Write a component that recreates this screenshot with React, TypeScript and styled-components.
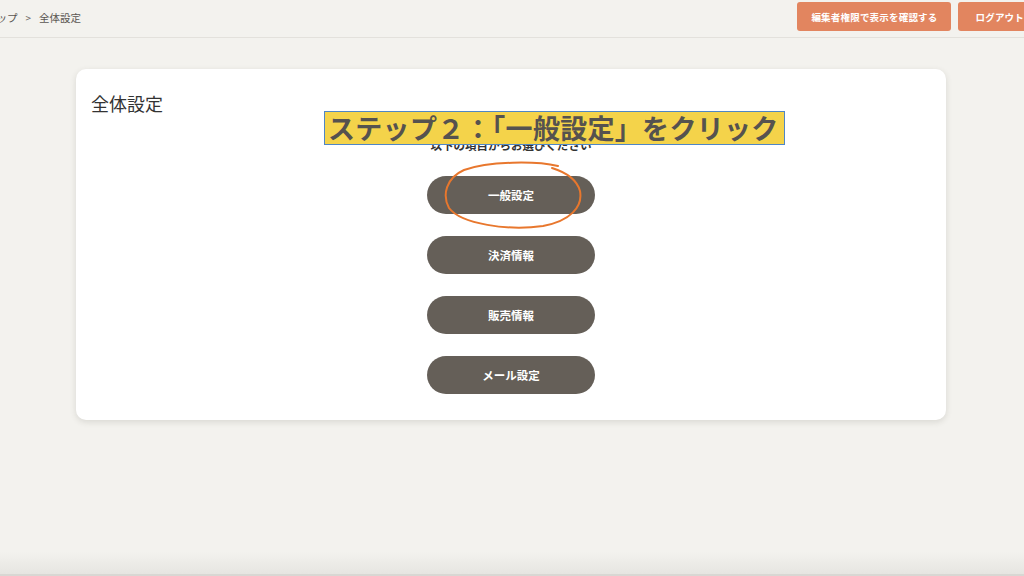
import React from "react";
import styled, { createGlobalStyle } from "styled-components";

const GlobalStyle = createGlobalStyle`
  html, body { margin: 0; padding: 0; }
  body {
    background: #f3f2ee;
    font-family: "Noto Sans CJK JP", "Noto Sans", sans-serif;
    overflow: hidden;
  }
`;

const Page = styled.div`
  position: relative;
  width: 1024px;
  height: 576px;
  display: flex;
  flex-direction: column;
  overflow: hidden;
  background: #f3f2ee;
`;

const Header = styled.header`
  height: 37px;
  border-bottom: 1px solid #e3e1dc;
  display: flex;
  align-items: center;
  justify-content: space-between;
`;

const Breadcrumb = styled.nav`
  display: flex;
  align-items: center;
  gap: 8px;
  margin-left: -14px;
  margin-top: -2px;
  font-size: 10.5px;
  color: #5a5652;
`;

const Sep = styled.span`
  color: #6a6661;
  font-size: 10px;
`;

const Actions = styled.div`
  display: flex;
  gap: 7px;
  margin-right: -17px;
  margin-top: -4px;
`;

const HeadButton = styled.button<{ $pad: number }>`
  height: 29px;
  padding: 0 ${(p) => p.$pad}px;
  border: none;
  border-radius: 3px;
  background: #e2855f;
  color: #fff;
  font-family: inherit;
  font-size: 9.5px;
  font-weight: 700;
  letter-spacing: 0.2px;
`;

const Main = styled.main`
  flex: 1;
  padding-top: 31px;
`;

const Card = styled.section`
  width: 870px;
  margin-left: 76px;
  background: #fff;
  border-radius: 10px;
  box-shadow: 0 2px 6px rgba(60, 55, 45, 0.14);
  padding: 22px 15px 26px;
  box-sizing: border-box;
  display: flex;
  flex-direction: column;
`;

const Title = styled.h2`
  margin: 0;
  font-size: 18px;
  line-height: 24px;
  font-weight: 400;
  color: #333;
`;

const Lead = styled.p`
  margin: 22px 0 0;
  text-align: center;
  font-size: 11.5px;
  line-height: 16px;
  font-weight: 700;
  color: #333;
`;

const Menu = styled.div`
  margin-top: 23px;
  display: flex;
  flex-direction: column;
  align-items: center;
  gap: 22px;
`;

const MenuButton = styled.button`
  width: 168px;
  height: 38px;
  border: none;
  border-radius: 19px;
  background: #655f58;
  color: #fff;
  font-family: inherit;
  font-size: 11.5px;
  font-weight: 700;
`;

const FooterShade = styled.div`
  height: 22px;
  background: linear-gradient(#f3f2ee, #e6e5e1);
  border-bottom: 2px solid #d8d7d3;
`;

const Banner = styled.div`
  position: absolute;
  left: 324px;
  top: 111px;
  width: 461px;
  height: 34px;
  box-sizing: border-box;
  border: 1.5px solid #4f86c6;
  background: #f4d34a;
  color: #55524f;
  font-size: 27px;
  font-weight: 700;
  line-height: 31px;
  white-space: nowrap;
  padding-left: 3px;
  letter-spacing: 0.3px;
`;

const Circle = styled.svg`
  position: absolute;
  left: 440px;
  top: 158px;
  pointer-events: none;
`;

const menu = ["一般設定", "決済情報", "販売情報", "メール設定"];

export default function App() {
  return (
    <Page>
      <GlobalStyle />
      <Header>
        <Breadcrumb>
          <span>トップ</span>
          <Sep>&gt;</Sep>
          <span>全体設定</span>
        </Breadcrumb>
        <Actions>
          <HeadButton $pad={14}>編集者権限で表示を確認する</HeadButton>
          <HeadButton $pad={17}>ログアウト</HeadButton>
        </Actions>
      </Header>
      <Main>
        <Card>
          <Title>全体設定</Title>
          <Lead>以下の項目からお選びください</Lead>
          <Menu>
            {menu.map((m) => (
              <MenuButton key={m}>{m}</MenuButton>
            ))}
          </Menu>
        </Card>
      </Main>
      <FooterShade />
      <Banner>ステップ２：「一般設定」をクリック</Banner>
      <Circle width="146" height="76" viewBox="0 0 146 76">
        <path
          d="M118 8 C 96 3, 50 3, 24 12 C 6 20, 2 37, 9 50 C 21 66, 68 73, 103 68 C 130 63, 143 49, 140 33 C 137 22, 128 15, 112 10"
          fill="none"
          stroke="#e8772d"
          strokeWidth="2"
          strokeLinecap="round"
        />
      </Circle>
    </Page>
  );
}
